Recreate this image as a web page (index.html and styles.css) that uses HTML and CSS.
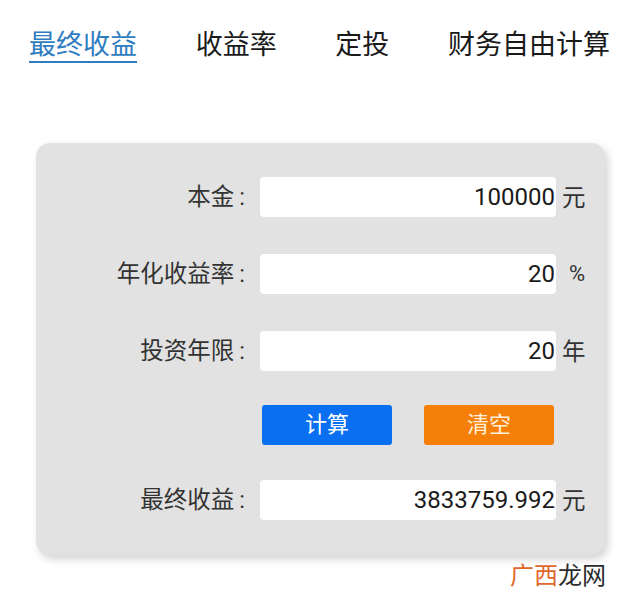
FILE: index.html
```html
<!DOCTYPE html>
<html lang="zh-CN">
<head>
    <meta charset="UTF-8">
    <meta name="viewport" content="width=device-width, initial-scale=1.0">
    <title>收益计算器</title>
    <link rel="stylesheet" href="styles.css">
</head>
<body>
    <nav class="tabs">
        <a class="tab active">最终收益</a>
        <a class="tab">收益率</a>
        <a class="tab">定投</a>
        <a class="tab">财务自由计算</a>
    </nav>

    <div class="calc-card">
        <div class="calc-row">
            <span class="calc-label">本金<span class="colon">:</span></span>
            <div class="calc-field">100000</div>
            <span class="calc-unit">元</span>
        </div>
        <div class="calc-row">
            <span class="calc-label">年化收益率<span class="colon">:</span></span>
            <div class="calc-field">20</div>
            <span class="calc-unit percent">%</span>
        </div>
        <div class="calc-row">
            <span class="calc-label">投资年限<span class="colon">:</span></span>
            <div class="calc-field">20</div>
            <span class="calc-unit">年</span>
        </div>
        <div class="calc-row">
            <span class="calc-label"></span>
            <div class="calc-buttons">
                <button type="button" class="btn btn-blue">计算</button>
                <button type="button" class="btn btn-orange">清空</button>
            </div>
        </div>
        <div class="calc-row">
            <span class="calc-label">最终收益<span class="colon">:</span></span>
            <div class="calc-field">3833759.992</div>
            <span class="calc-unit">元</span>
        </div>
    </div>

    <div class="watermark"><span class="wm-accent">广西</span>龙网</div>
</body>
</html>
```

FILE: styles.css
```css
body {
    margin: 0;
    height: 604px;
    position: relative;
    overflow: hidden;
    background-color: white;
    font-family: Roboto, "Noto Sans CJK SC", sans-serif;
    color: #222;
}
.tabs {
    display: flex;
    justify-content: space-between;
    padding: 27px 30px 0 29px;
    height: 53px;
    font-size: 27px;
    line-height: 36px;
}
.tab {
    height: 34px;
    color: #1a1a1a;
}
.tab.active {
    color: #2f7cc0;
    border-bottom: 2px solid #2f7cc0;
}
.calc-card {
    margin: 63px 35px 0 36px;
    padding: 34px 0 35px;
    display: flex;
    flex-direction: column;
    gap: 37px;
    background-color: #e2e2e2;
    border-radius: 14px;
    box-shadow: 3px 4px 8px rgba(0,0,0,0.18);
}
.calc-row {
    display: flex;
    align-items: center;
    height: 40px;
}
.calc-row:nth-child(4) {
    margin-top: -3px;
    margin-bottom: -2px;
}
.calc-label {
    width: 209px;
    padding-bottom: 4px;
    text-align: right;
    font-size: 23.5px;
    color: #333;
}
.colon {
    margin-left: 5px;
}
.calc-field {
    width: 295px;
    height: 40px;
    margin-left: 15px;
    padding-right: 1px;
    line-height: 40px;
    text-align: right;
    font-size: 24px;
    color: #1a1a1a;
    background-color: white;
    border-radius: 4px;
}
.calc-unit {
    margin-left: 6px;
    padding-bottom: 2px;
    font-size: 23.5px;
    color: #333;
}
.calc-unit.percent {
    margin-left: 13px;
    font-size: 22px;
}
.calc-buttons {
    display: flex;
    gap: 32px;
    margin-left: 17px;
}
.btn {
    width: 130px;
    height: 40px;
    padding: 0 0 6px;
    border: none;
    border-radius: 3px;
    font-family: inherit;
    font-size: 22px;
    color: white;
    cursor: pointer;
}
.btn-blue {
    background-color: #0a6ff0;
}
.btn-orange {
    background-color: #f57f08;
    color: #fdf0dc;
}
.watermark {
    position: absolute;
    left: 510px;
    top: 559px;
    font-size: 24px;
    line-height: 34px;
    color: #2b2b2b;
}
.wm-accent {
    color: #e0672a;
}
```
